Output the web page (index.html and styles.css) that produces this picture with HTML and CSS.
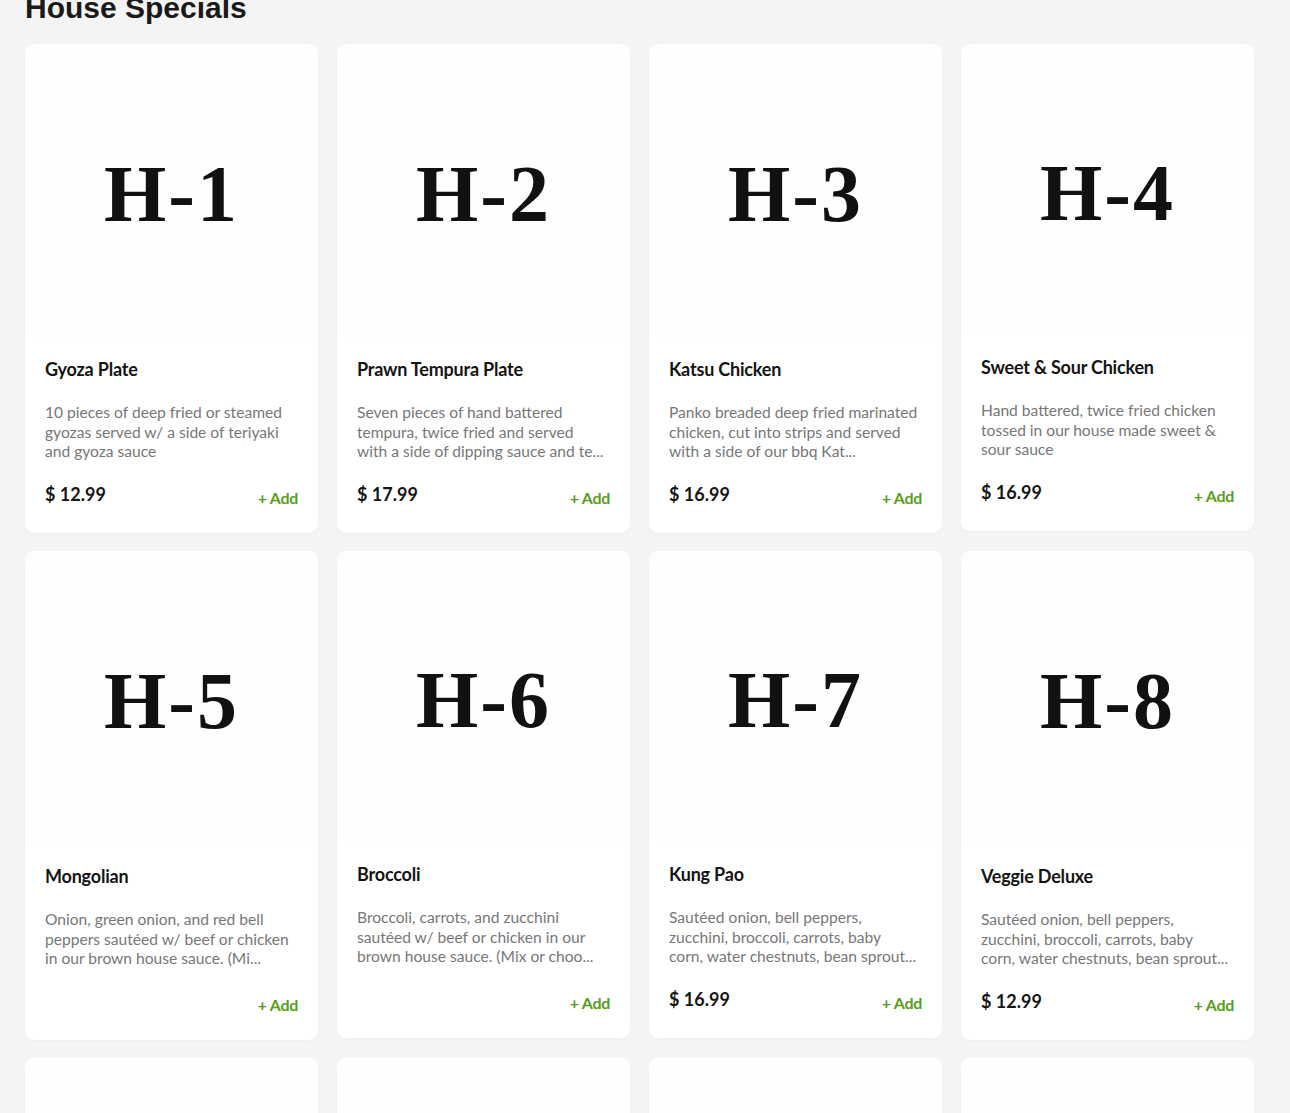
FILE: index.html
```html
<!DOCTYPE html>
<html lang="en">
<head>
<meta charset="utf-8">
<title>House Specials</title>
<link rel="stylesheet" href="styles.css">
</head>
<body>
<main class="page">
  <h2 class="section-title">House Specials</h2>
  <div class="grid">
    <article class="card">
      <div class="thumb"><span class="thumb-label">H-1</span></div>
      <div class="body">
        <h3 class="name">Gyoza Plate</h3>
        <p class="desc">10 pieces of deep fried or steamed<br>gyozas served w/ a side of teriyaki<br>and gyoza sauce</p>
        <div class="foot"><span class="price">$ 12.99</span><button class="add">+ Add</button></div>
      </div>
    </article>
    <article class="card">
      <div class="thumb"><span class="thumb-label">H-2</span></div>
      <div class="body">
        <h3 class="name">Prawn Tempura Plate</h3>
        <p class="desc">Seven pieces of hand battered<br>tempura, twice fried and served<br>with a side of dipping sauce and te...</p>
        <div class="foot"><span class="price">$ 17.99</span><button class="add">+ Add</button></div>
      </div>
    </article>
    <article class="card">
      <div class="thumb"><span class="thumb-label">H-3</span></div>
      <div class="body">
        <h3 class="name">Katsu Chicken</h3>
        <p class="desc">Panko breaded deep fried marinated<br>chicken, cut into strips and served<br>with a side of our bbq Kat...</p>
        <div class="foot"><span class="price">$ 16.99</span><button class="add">+ Add</button></div>
      </div>
    </article>
    <article class="card">
      <div class="thumb thumb--short"><span class="thumb-label">H-4</span></div>
      <div class="body">
        <h3 class="name">Sweet &amp; Sour Chicken</h3>
        <p class="desc">Hand battered, twice fried chicken<br>tossed in our house made sweet &amp;<br>sour sauce</p>
        <div class="foot"><span class="price">$ 16.99</span><button class="add">+ Add</button></div>
      </div>
    </article>

    <article class="card">
      <div class="thumb"><span class="thumb-label">H-5</span></div>
      <div class="body">
        <h3 class="name">Mongolian</h3>
        <p class="desc">Onion, green onion, and red bell<br>peppers sautéed w/ beef or chicken<br>in our brown house sauce. (Mi...</p>
        <div class="foot"><span class="price"></span><button class="add">+ Add</button></div>
      </div>
    </article>
    <article class="card">
      <div class="thumb thumb--short"><span class="thumb-label">H-6</span></div>
      <div class="body">
        <h3 class="name">Broccoli</h3>
        <p class="desc">Broccoli, carrots, and zucchini<br>sautéed w/ beef or chicken in our<br>brown house sauce. (Mix or choo...</p>
        <div class="foot"><span class="price"></span><button class="add">+ Add</button></div>
      </div>
    </article>
    <article class="card">
      <div class="thumb thumb--short"><span class="thumb-label">H-7</span></div>
      <div class="body">
        <h3 class="name">Kung Pao</h3>
        <p class="desc">Sautéed onion, bell peppers,<br>zucchini, broccoli, carrots, baby<br>corn, water chestnuts, bean sprout...</p>
        <div class="foot"><span class="price">$ 16.99</span><button class="add">+ Add</button></div>
      </div>
    </article>
    <article class="card">
      <div class="thumb"><span class="thumb-label">H-8</span></div>
      <div class="body">
        <h3 class="name">Veggie Deluxe</h3>
        <p class="desc">Sautéed onion, bell peppers,<br>zucchini, broccoli, carrots, baby<br>corn, water chestnuts, bean sprout...</p>
        <div class="foot"><span class="price">$ 12.99</span><button class="add">+ Add</button></div>
      </div>
    </article>

    <article class="card">
      <div class="thumb"><span class="thumb-label">H-9</span></div>
    </article>
    <article class="card">
      <div class="thumb"><span class="thumb-label">H-10</span></div>
    </article>
    <article class="card">
      <div class="thumb"><span class="thumb-label">H-11</span></div>
    </article>
    <article class="card">
      <div class="thumb"><span class="thumb-label">H-12</span></div>
    </article>
  </div>
</main>
</body>
</html>
```

FILE: styles.css
```css
html, body {
  margin: 0;
  padding: 0;
  background: #f4f4f4;
}

.page {
  padding: 0 36px 40px 25px;
  font-family: "Lato", "Liberation Sans", sans-serif;
}

.section-title {
  font-family: "Liberation Sans", Arial, sans-serif;
  font-weight: 700;
  font-size: 30px;
  line-height: 34px;
  color: #1a1a1a;
  margin: -9px 0 19px;
}

.grid {
  display: grid;
  grid-template-columns: repeat(4, 293px);
  column-gap: 19px;
  row-gap: 18px;
  align-items: start;
}

.card {
  background: #ffffff;
  border-radius: 9px;
  overflow: hidden;
  box-shadow: 0 1px 2px rgba(0, 0, 0, 0.03);
}

.thumb {
  height: 293px;
  display: flex;
  align-items: center;
  justify-content: center;
  background: #fefefe;
}

.thumb--short {
  height: 291px;
}

.thumb-label {
  font-family: "Liberation Serif", "Times New Roman", serif;
  font-weight: 700;
  font-size: 80px;
  line-height: 1;
  color: #111111;
  margin-top: 6px;
  letter-spacing: 2px;
}

.body {
  padding: 21px 20px 25px;
}

.name {
  margin: 0;
  font-size: 18px;
  line-height: 22px;
  font-weight: 700;
  color: #141414;
  letter-spacing: -0.2px;
}

.desc {
  margin: 23px 0 0;
  font-size: 15.6px;
  line-height: 19.5px;
  color: #777777;
  height: 58.5px;
  overflow: hidden;
  white-space: nowrap;
}

.foot {
  margin-top: 21.5px;
  display: flex;
  justify-content: space-between;
  align-items: flex-start;
  height: 25px;
}

.price {
  font-size: 18px;
  line-height: 22px;
  font-weight: 700;
  color: #161616;
}

.add {
  margin-top: 5px;
  padding: 0;
  border: 0;
  background: none;
  font-family: "Lato", "Liberation Sans", sans-serif;
  font-size: 16px;
  line-height: 20px;
  font-weight: 700;
  color: #5a9e1c;
  cursor: pointer;
  letter-spacing: -0.3px;
}
```
